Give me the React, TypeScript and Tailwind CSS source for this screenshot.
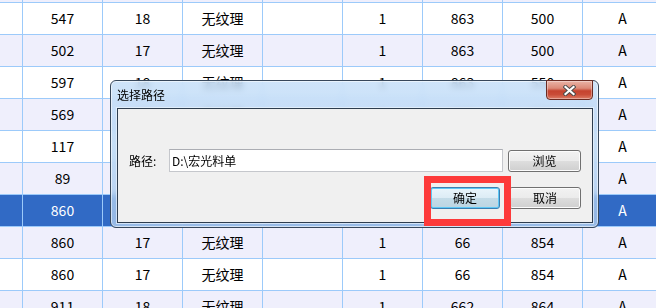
import React from "react";

type Row = { a: string; b: string; c: string; f: string; g: string; h: string; i: string; bg: "w" | "l" | "s" };

const rows: Row[] = [
  { a: "", b: "", c: "", f: "", g: "", h: "", i: "", bg: "l" },
  { a: "547", b: "18", c: "无纹理", f: "1", g: "863", h: "500", i: "A", bg: "w" },
  { a: "502", b: "17", c: "无纹理", f: "1", g: "863", h: "500", i: "A", bg: "l" },
  { a: "597", b: "18", c: "无纹理", f: "1", g: "863", h: "550", i: "A", bg: "w" },
  { a: "569", b: "18", c: "无纹理", f: "1", g: "863", h: "550", i: "A", bg: "l" },
  { a: "117", b: "18", c: "无纹理", f: "1", g: "863", h: "550", i: "A", bg: "w" },
  { a: "89", b: "17", c: "无纹理", f: "1", g: "66", h: "854", i: "A", bg: "l" },
  { a: "860", b: "17", c: "无纹理", f: "1", g: "66", h: "854", i: "A", bg: "s" },
  { a: "860", b: "17", c: "无纹理", f: "1", g: "66", h: "854", i: "A", bg: "l" },
  { a: "860", b: "17", c: "无纹理", f: "1", g: "66", h: "854", i: "A", bg: "w" },
  { a: "911", b: "18", c: "无纹理", f: "1", g: "662", h: "864", i: "A", bg: "l" },
];

const bgClass = { w: "bg-white text-black", l: "bg-[#efeffc] text-black", s: "bg-[#316ac5] text-white" };

function Cell({ children }: { children?: React.ReactNode }) {
  return (
    <div className="w-[80px] shrink-0 border-r border-[#9ccafa] flex items-center justify-center">{children}</div>
  );
}

function Btn({ label, w, focused }: { label: string; w: string; focused?: boolean }) {
  return (
    <div
      className={
        focused
          ? `${w} h-[22px] rounded-[3px] border border-[#3c7fb1] shadow-[inset_0_0_0_1px_#5fc8f5] bg-[linear-gradient(to_bottom,#eaf5fb_0%,#dcecf5_50%,#c4dce8_51%,#bcd5e2_100%)] flex items-center justify-center text-[12px] text-black`
          : `${w} h-[22px] rounded-[3px] border border-[#707070] shadow-[inset_0_0_0_1px_#fcfcfc] bg-[linear-gradient(to_bottom,#f2f2f2_0%,#ebebeb_50%,#dddddd_51%,#cfcfcf_100%)] flex items-center justify-center text-[12px] text-black`
      }
    >
      {label}
    </div>
  );
}

export default function App() {
  return (
    <div
      className="relative w-[656px] h-[308px] overflow-hidden bg-white"
      style={{ fontFamily: '"Noto Sans CJK SC", "Noto Sans", sans-serif' }}
    >
      <div className="-mt-[29px] text-[14px]">
        {rows.map((r, idx) => (
          <div key={idx} className={`flex h-[32px] border-b border-[#9ccafa] ${bgClass[r.bg]}`}>
            <div className="w-[23px] shrink-0 border-r border-[#9ccafa]" />
            <Cell>{r.a}</Cell>
            <Cell>{r.b}</Cell>
            <Cell>{r.c}</Cell>
            <Cell />
            <Cell>{r.f}</Cell>
            <Cell>{r.g}</Cell>
            <Cell>{r.h}</Cell>
            <Cell>{r.i}</Cell>
          </div>
        ))}
      </div>

      {/* Dialog */}
      <div className="absolute left-[110px] top-[80px] w-[489px] h-[148px] rounded-[6px] border border-[#37475a] shadow-[inset_0_0_0_1px_rgba(255,255,255,0.55)] bg-[linear-gradient(to_bottom,rgba(196,222,248,0.82),rgba(178,210,242,0.8)_60%,rgba(170,200,235,0.82))] backdrop-blur-[3px] flex flex-col">
        <div className="h-[27px] flex items-center pl-[6px] text-[12px] text-black">选择路径</div>
        <div className="absolute top-[-1px] right-[5px] w-[47px] h-[20px] rounded-b-[4px] border border-[#6a2b22] bg-[linear-gradient(to_bottom,#eab3a6_0%,#dc8a78_40%,#c5432f_55%,#c94c37_75%,#dc7c66_100%)] shadow-[inset_0_0_0_1px_rgba(255,255,255,0.35)] flex items-center justify-center">
          <svg width="13" height="11" viewBox="0 0 13 11">
            <path d="M2.5 2 L10.5 9 M10.5 2 L2.5 9" stroke="#4a4a4a" strokeWidth="4" strokeLinecap="square" />
            <path d="M2.5 2 L10.5 9 M10.5 2 L2.5 9" stroke="#ffffff" strokeWidth="2.2" strokeLinecap="square" />
          </svg>
        </div>
        <div className="ml-[6px] mr-[5px] mb-[4px] flex-1 border border-[#2e3d4f] shadow-[0_0_0_1px_rgba(235,244,252,0.7)] bg-[#f0f0f0] pl-[11px] pr-[11px] pt-[40px] text-[12px] text-black">
          <div className="flex items-center h-[23px]">
            <div className="w-[40px] shrink-0">路径:</div>
            <div className="w-[335px] h-[23px] border border-[#c5c7cc] border-t-[#abadb3] bg-white flex items-center pl-[2px]">
              D:\宏光料单
            </div>
            <div className="ml-[5px]">
              <Btn label="浏览" w="w-[73px]" />
            </div>
          </div>
          <div className="mt-[15px] flex justify-end gap-[9px]">
            <Btn label="确定" w="w-[70px]" focused />
            <Btn label="取消" w="w-[72px]" />
          </div>
        </div>
      </div>

      {/* Red annotation box */}
      <div className="absolute left-[424px] top-[176px] w-[87px] h-[50px] border-[7px] border-[#fd3a3a]" />
    </div>
  );
}
